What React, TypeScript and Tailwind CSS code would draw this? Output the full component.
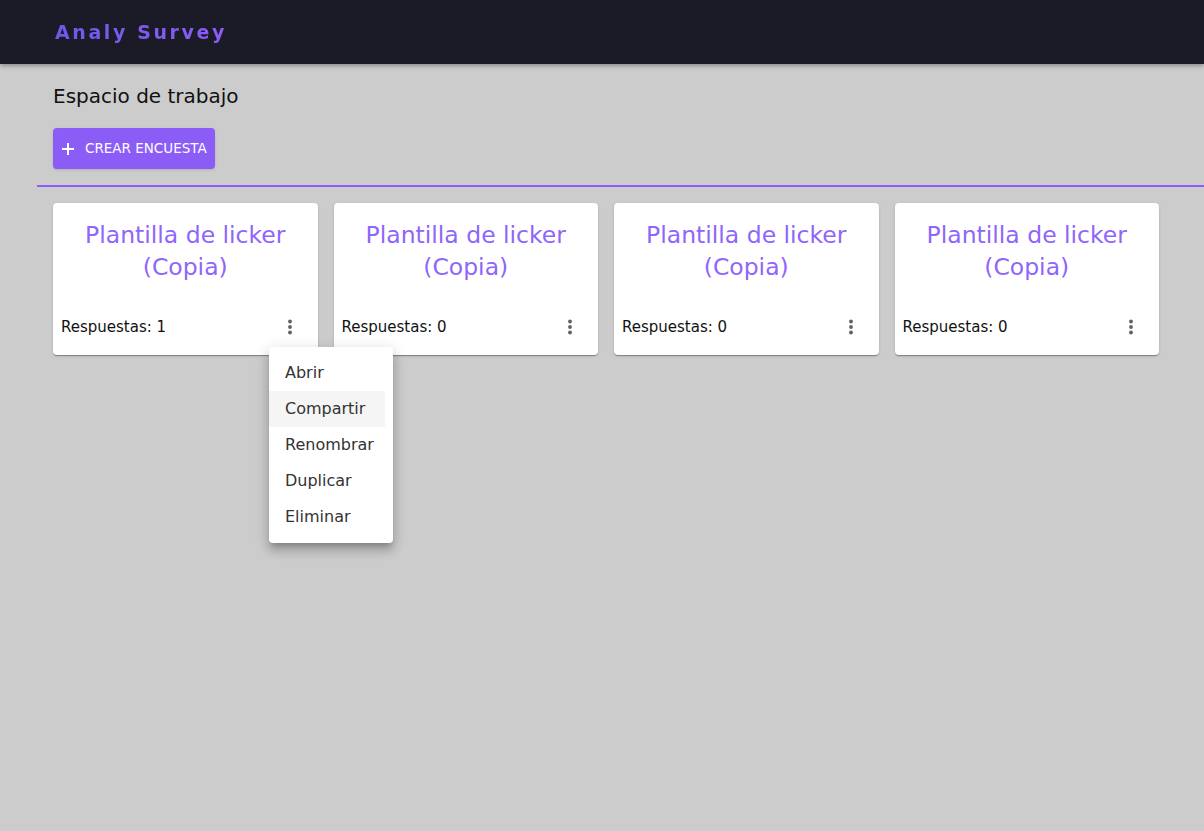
import React from 'react';

const surveys = [
  { title: 'Plantilla de licker (Copia)', responses: 1 },
  { title: 'Plantilla de licker (Copia)', responses: 0 },
  { title: 'Plantilla de licker (Copia)', responses: 0 },
  { title: 'Plantilla de licker (Copia)', responses: 0 },
];

const menuItems = ['Abrir', 'Compartir', 'Renombrar', 'Duplicar', 'Eliminar'];

function Kebab() {
  return (
    <svg width="24" height="24" viewBox="0 0 24 24" fill="#616161">
      <circle cx="12" cy="6.5" r="1.9" />
      <circle cx="12" cy="12" r="1.9" />
      <circle cx="12" cy="17.5" r="1.9" />
    </svg>
  );
}

export default function App() {
  return (
    <div className="min-h-[831px] bg-[#cccccc] font-['DejaVu_Sans',sans-serif] relative">
      {/* Top bar */}
      <header className="h-16 bg-[#1b1a27] flex items-center px-[55px] shadow-[0_2px_4px_rgba(0,0,0,0.3)]">
        <h1 className="text-[19px] font-bold tracking-[2.6px] bg-gradient-to-r from-[#6a5ae8] to-[#8f5cf7] bg-clip-text text-transparent">
          Analy Survey
        </h1>
      </header>

      <main className="pt-[20px]">
        <div className="px-[53px]">
          <h2 className="text-[20px] leading-[24px] text-[#111]">Espacio de trabajo</h2>
          <button className="mt-[20px] h-[41px] px-[8px] flex items-center gap-[10px] rounded bg-[#8b5cf6] text-white text-[13.5px] shadow-sm">
            <svg width="14" height="14" viewBox="0 0 14 14" stroke="white" strokeWidth="2">
              <path d="M7 1v12M1 7h12" />
            </svg>
            CREAR ENCUESTA
          </button>
        </div>

        <div className="ml-[37px] mt-[16px] h-[2px] bg-[#8b5cf6]" />

        <div className="px-[53px] pt-[16px] flex gap-[16px]">
          {surveys.map((s, i) => (
            <div
              key={i}
              className="w-[264.5px] h-[152px] shrink-0 bg-white rounded shadow-[0_2px_1px_-1px_rgba(0,0,0,0.2),0_1px_1px_0_rgba(0,0,0,0.14),0_1px_3px_0_rgba(0,0,0,0.12)] flex flex-col"
            >
              <div className="pt-[16px] px-[16px] text-center text-[23.5px] leading-[32px] text-[#8f66fa]">
                {s.title}
              </div>
              <div className="mt-auto mb-[16px] pl-[8px] pr-[16px] flex items-center justify-between">
                <span className="text-[15px] text-[#111]">Respuestas: {s.responses}</span>
                <Kebab />
              </div>
            </div>
          ))}
        </div>
      </main>

      {/* Context menu */}
      <div className="absolute left-[269px] top-[347px] w-[124px] bg-white rounded py-[8px] shadow-[0_5px_5px_-3px_rgba(0,0,0,0.2),0_8px_10px_1px_rgba(0,0,0,0.14),0_3px_14px_2px_rgba(0,0,0,0.12)]">
        {menuItems.map((m) => (
          <div
            key={m}
            className={`h-[36px] w-[116px] flex items-center pl-[16px] text-[16px] text-[#333] ${m === 'Compartir' ? 'bg-[#f5f5f5]' : ''}`}
          >
            {m}
          </div>
        ))}
      </div>
    </div>
  );
}
